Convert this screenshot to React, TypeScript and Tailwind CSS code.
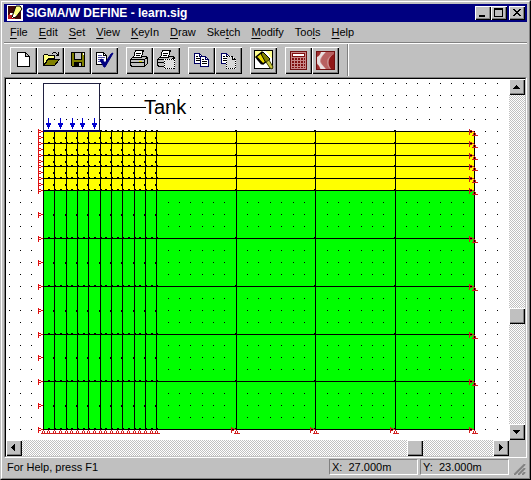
import type { ReactNode } from 'react';

const raised =
  'bg-[#c0c0c0] shadow-[inset_1px_1px_0_#fff,inset_-1px_-1px_0_#000,inset_-2px_-2px_0_#808080]';
const track =
  'bg-[conic-gradient(#fff_25%,#c0c0c0_0_50%,#fff_0_75%,#c0c0c0_0)] bg-[length:2px_2px]';

/* ---------- toolbar icons ---------- */

const NewIcon = () => (
  <path d="M7.5 5.5h8l4 4v10h-12zM15.5 5.5v4h4" fill="#fff" stroke="#000" />
);

const OpenIcon = () => (
  <>
    <path d="M6.5 18.5v-10l1-1h3l1 1h6v3h-6z" fill="#ffff80" stroke="#000" />
    <path d="M6.5 18.5l5-6h11l-5 6z" fill="#808000" stroke="#000" />
    <path d="M15 6.5h1M16 5.5h3M19 6.5h1M20 7.5h2M19 8.5h3M21.5 5v4" stroke="#000" fill="none" />
  </>
);

const SaveIcon = () => (
  <>
    <path d="M7.5 5.5h13v14h-12l-1-1z" fill="#808000" stroke="#000" />
    <path d="M10.5 5.5h7v7h-7z" fill="#c0c0c0" stroke="#000" />
    <path d="M10 15h8v5h-8z" fill="#000" />
    <path d="M15 16h2v3h-2z" fill="#c0c0c0" />
    <path d="M19 6h1v2h-1z" fill="#fff" />
  </>
);

const VerifyIcon = () => (
  <>
    <path d="M5.5 5.5h7l3 3v9h-10z" fill="#fff" stroke="#000" />
    <path d="M12.5 5.5v3h3" stroke="#000" fill="none" />
    <path d="M7 8.5h4M7 10.5h7M7 12.5h6M7 14.5h5" stroke="#5050a0" />
    <path
      d="M9 13l2-1 3 4 6-9 2-1-1 2-7 12h-1z"
      fill="#000080"
      stroke="#000080"
      shapeRendering="auto"
    />
  </>
);

const PrinterBody = () => (
  <>
    <path d="M4.5 12.5l3-3h13l1 2v5l-3 3h-13l-1-2z" fill="#c0c0c0" stroke="#000" />
    <path d="M4.5 12.5h14l3-2M18.5 12.5v7M5 15.5h13" stroke="#000" fill="none" />
    <path d="M7.5 10.5l2-7h8l-1 2-1 5z" fill="#fff" stroke="#000" />
    <path d="M10 6.5h5M10 8.5h4" stroke="#000" />
    <path d="M13 14h3v1h-3z" fill="#d8d800" />
  </>
);

const PrintAreaIcon = () => (
  <>
    <PrinterBody />
    <path d="M11.5 12.5h10v9h-10z" fill="#e0e0e0" stroke="#fff" />
    <path d="M11.5 12.5h10v9h-10z" fill="none" stroke="#000" strokeDasharray="1 1" />
  </>
);

const Sheet = ({ x, y }: { x: number; y: number }) => (
  <g transform={`translate(${x} ${y})`}>
    <path d="M.5.5h5l3 3v7h-8z" fill="#fff" stroke="#000060" />
    <path d="M5.5.5v3h3" fill="none" stroke="#000060" />
    <path d="M2 3.5h2M2 5.5h5M2 7.5h5" stroke="#000" />
  </g>
);

const CopyIcon = () => (
  <>
    <Sheet x={6} y={6} />
    <Sheet x={12} y={9} />
  </>
);

const CopyAreaIcon = () => (
  <>
    <Sheet x={6} y={6} />
    <path d="M11.5 9.5h6l3 3v9h-9z" fill="#d8d8d8" stroke="#fff" />
    <path d="M11.5 9.5h6l3 3v9h-9z" fill="none" stroke="#000" strokeDasharray="1 1" />
    <path d="M17.5 9.5v3h3" fill="none" stroke="#000" />
  </>
);

const BrushIcon = () => (
  <>
    <path d="M4.5 3.5h18v18h-18z" fill="#fff" stroke="#000" />
    <path d="M5 4h7l-7 8zM16 4h6v8z" fill="#ffff90" />
    <g shapeRendering="auto">
      <path d="M6 10l6-5 6 8-5 4z" fill="#e8d800" stroke="#000" strokeWidth="1.5" />
      <path d="M11 7l2-2 7 7-4 4z" fill="#808000" stroke="#000" />
      <path d="M16 15l3-2 4 7-1 2-2-1z" fill="#c8c840" stroke="#404000" />
      <path d="M7 11l5 6" stroke="#000" strokeWidth="2" />
    </g>
  </>
);

const CalculatorIcon = () => (
  <>
    <path d="M5.5 4.5h16v18h-16z" fill="#c88a8a" stroke="#701010" />
    <path d="M7.5 6.5h12v3h-12z" fill="#fff" stroke="#801010" />
    <path
      d="M7 12h13M7 15h13M7 18h13"
      stroke="#801010"
      strokeWidth="2"
      strokeDasharray="2 1"
    />
    <path d="M7 20.5h13" stroke="#801010" strokeDasharray="2 1" />
  </>
);

const ContourIcon = () => (
  <>
    <path d="M4.5 4.5h18v18h-18z" fill="#c98d8d" />
    <g shapeRendering="auto">
      <path d="M5 5h9c-4 4-6 6-6 9s4 5 6 8H9c-3-2-4-5-4-8z" fill="#e8dede" />
      <path d="M5 5h4c-1 3-2 4-4 5zM5 17c2 1 3 3 3 5H5z" fill="#a03030" />
      <path d="M14 5h8v2c-5 2-7 5-7 8s1 5 3 7h-4c-2-3-5-5-5-8s2-6 5-9z" fill="#b86060" />
      <path d="M22 7c-6 3-7 10-3 15h3z" fill="#901818" />
    </g>
    <path d="M4.5 4.5h18v18h-18z" fill="none" stroke="#701010" />
  </>
);

const toolGroups: { name: string; icon: ReactNode }[][] = [
  [
    { name: 'New', icon: <NewIcon /> },
    { name: 'Open', icon: <OpenIcon /> },
    { name: 'Save', icon: <SaveIcon /> },
    { name: 'Verify', icon: <VerifyIcon /> },
  ],
  [
    { name: 'Print', icon: <PrinterBody /> },
    { name: 'Print selection', icon: <PrintAreaIcon /> },
  ],
  [
    { name: 'Copy', icon: <CopyIcon /> },
    { name: 'Copy selection', icon: <CopyAreaIcon /> },
  ],
  [{ name: 'Redraw', icon: <BrushIcon /> }],
  [
    { name: 'Solve', icon: <CalculatorIcon /> },
    { name: 'Contour', icon: <ContourIcon /> },
  ],
];

/* Each menu is split around its accelerator letter. */
const menus: [string, string, string][] = [
  ['', 'F', 'ile'],
  ['', 'E', 'dit'],
  ['', 'S', 'et'],
  ['', 'V', 'iew'],
  ['', 'K', 'eyIn'],
  ['', 'D', 'raw'],
  ['Ske', 't', 'ch'],
  ['', 'M', 'odify'],
  ['Too', 'l', 's'],
  ['', 'H', 'elp'],
];

/* ---------- finite element mesh ---------- */

const gx = (n: number) => Math.floor(37.3 + n * 11.35);
const gy = (n: number) => Math.floor(52.2 + n * 11.93);
const range = (from: number, to: number, step = 1) =>
  Array.from({ length: Math.floor((to - from) / step) + 1 }, (_, i) => from + i * step);

const LEFT = gx(0);
const RIGHT = gx(38);
const TOP = gy(0);
const LAYER = gy(5);
const BASE = gy(25);
const fineCols = range(1, 10);
const coarseCols = [17, 24, 31];
const fineRows = range(0, 5);
const coarseRows = [9, 13, 17, 21, 25];
const allRows = [...fineRows, ...coarseRows];

const RollerRight = ({ x, y }: { x: number; y: number }) => (
  <path
    d={`M${x + 0.5} ${y - 2}v6M${x + 1} ${y - 0.5}h2M${x + 3} ${y + 0.5}h2M${x + 1} ${y + 1.5}h2`}
  />
);
const RollerUp = ({ x, y }: { x: number; y: number }) => (
  <path
    d={`M${x} ${y}h1M${x - 1} ${y + 1}h1M${x + 1} ${y + 1}h1M${x - 1} ${y + 2}h1M${x + 1} ${y + 2}h1M${x - 2} ${y + 3}h6`}
  />
);

function Mesh() {
  return (
    <svg
      width="502"
      height="361"
      viewBox="0 0 502 361"
      className="block max-w-none"
      shapeRendering="crispEdges"
      role="img"
      aria-label="Finite element mesh"
    >
      <rect x={LEFT} y={TOP} width={RIGHT - LEFT} height={LAYER - TOP} fill="#ff0" />
      <rect x={LEFT} y={LAYER} width={RIGHT - LEFT} height={BASE - LAYER} fill="#0f0" />

      {range(-4, 25).map((r) =>
        range(-3, 41).map((c) => (
          <rect key={`${r}:${c}`} x={gx(c)} y={gy(r)} width="1" height="1" fill="#000" />
        )),
      )}

      <g fill="#000">
        {allRows.map((r) => (
          <rect key={r} x={LEFT} y={gy(r)} width={RIGHT - LEFT + 1} height="1" />
        ))}
        {[0, ...fineCols, ...coarseCols, 38].map((c) => (
          <rect key={c} x={gx(c)} y={TOP} width="1" height={BASE - TOP + 1} />
        ))}
        {allRows.map((r) =>
          range(0.5, 10, 0.5).map((c) => (
            <rect key={`${r}:${c}`} x={gx(c)} y={gy(r) - 1} width="2" height="1" />
          )),
        )}
        {[...range(0.5, 4.5), 7, 11, 15, 19, 23].map((r) =>
          fineCols.map((c) => (
            <rect key={`${r}:${c}`} x={gx(c) - 1} y={gy(r)} width="1" height="2" />
          )),
        )}
        {allRows.map((r) =>
          coarseCols.map((c) => (
            <rect key={`${r}:${c}`} x={gx(c) - 1} y={gy(r) - 1} width="2" height="2" />
          )),
        )}
      </g>

      <g stroke="#e01010" fill="none">
        {range(0, 5, 0.5).map((r) => (
          <RollerRight key={r} x={32} y={gy(r)} />
        ))}
        <path d="M32.5 50v64" />
        {range(7, 25, 2).map((r) => (
          <RollerRight key={r} x={32} y={gy(r)} />
        ))}
      </g>
      <g stroke="#d02020" fill="none">
        {allRows.map((r) => (
          <g key={r}>
            <RollerRight x={RIGHT - 5} y={gy(r)} />
            <RollerUp x={RIGHT} y={gy(r) + 1.5} />
          </g>
        ))}
        {coarseCols.map((c) => (
          <g key={c}>
            <RollerRight x={gx(c) - 5} y={BASE} />
            <RollerUp x={gx(c)} y={BASE + 1.5} />
          </g>
        ))}
        {range(0, 10, 0.5).map((c) => (
          <RollerUp key={c} x={gx(c)} y={BASE + 1.5} />
        ))}
        <path d={`M${LEFT - 2} ${BASE + 4.5}H${gx(10) + 4}`} />
      </g>

      <path d="M37.5 52V4.5h56V52" fill="none" stroke="#202040" />
      <path d="M37 52h57" stroke="#000060" strokeWidth="2" />
      <path d="M94 28.5h45" stroke="#000" />
      {[42, 54, 66, 76, 88].map((x) => (
        <path key={x} d={`M${x} 39h1v5h2v2h-1v2h-1v2h-1v-2h-1v-2h-1v-2h2z`} fill="#0000d0" />
      ))}
      <text x="138" y="35" fontSize="20" fill="#000" className="font-['Liberation_Sans',Arial,sans-serif]">
        Tank
      </text>
    </svg>
  );
}

/* ---------- window parts ---------- */

const arrows = {
  up: 'M7 6h1v1h1v1h1v1h1v1H4V9h1V8h1V7h1z',
  down: 'M4 6h7v1h-1v1H9v1H8v1H7V9H6V8H5V7H4z',
  left: 'M9 4v7H8v-1H7V9H6V8H5V7h1V6h1V5h1V4z',
  right: 'M6 4h1v1h1v1h1v1h1v1H9v1H8v1H7v1H6z',
};

function ScrollButton({ dir }: { dir: keyof typeof arrows }) {
  return (
    <button type="button" aria-label={`Scroll ${dir}`} className={`size-4 shrink-0 ${raised}`}>
      <svg width="16" height="16" className="block" shapeRendering="crispEdges">
        <path d={arrows[dir]} />
      </svg>
    </button>
  );
}

function CaptionButton({ name, d }: { name: string; d: string }) {
  return (
    <button type="button" aria-label={name} className={`h-3.5 w-4 ${raised}`}>
      <svg width="16" height="14" className="block" shapeRendering="crispEdges">
        <path d={d} />
      </svg>
    </button>
  );
}

function TitleBar() {
  return (
    <header className="flex h-[18px] items-center bg-[#000080] pr-0.5 pl-[3px] text-white">
      <svg width="16" height="16" className="shrink-0" shapeRendering="crispEdges">
        <path d="M0 0h16v16H0z" fill="#fff" />
        <path d="M1 1h13v13H1z" fill="#400808" />
        <path d="M1 10c4-3 5 0 7 4H1z" fill="#c02020" />
        <path d="M3 8h5v2H3z" fill="#fff" />
        <path d="M9 1h4l2 3-6 8-4 1 1-4z" fill="#ffff80" stroke="#000" shapeRendering="auto" />
        <path d="M5 13l4-2-2-2z" fill="#fff" />
      </svg>
      <h1 className="ml-[3px] flex-1 text-[12px] leading-4 font-bold whitespace-nowrap">
        SIGMA/W DEFINE - learn.sig
      </h1>
      <CaptionButton name="Minimize" d="M4 9h6v2H4z" />
      <CaptionButton name="Maximize" d="M3 2h9v9H3zM4 4v6h7V4z" />
      <span className="w-0.5" />
      <CaptionButton
        name="Close"
        d="M4 3h2v1h1v1h2V4h1V3h2v1h-1v1h-1v1H9v1h1v1h1v1h1v1h-2V9H9V8H7v1H6v1H4V9h1V8h1V7h1V6H6V5H5V4H4z"
      />
    </header>
  );
}

function MenuBar() {
  return (
    <nav className="flex h-[22px] gap-[11px] border-b border-white pl-1.5 shadow-[inset_0_-1px_0_#808080]">
      {menus.map(([before, key, after]) => (
        <button key={before + key + after} type="button" className="h-5 text-[11px] leading-5">
          {before}
          <u className="underline-offset-2">{key}</u>
          {after}
        </button>
      ))}
    </nav>
  );
}

function ToolBar() {
  return (
    <div role="toolbar" aria-label="Standard" className="flex h-[33px] gap-2 pt-[3px] pl-1.5">
      {toolGroups.map((group) => (
        <div key={group[0].name} className="flex">
          {group.map((tool) => (
            <button
              key={tool.name}
              type="button"
              aria-label={tool.name}
              className={`size-[27px] ${raised}`}
            >
              <svg width="27" height="27" className="block" shapeRendering="crispEdges">
                {tool.icon}
              </svg>
            </button>
          ))}
        </div>
      ))}
      <span className="-mt-[3px] h-8 w-0.5 border-l border-[#808080] bg-white" />
    </div>
  );
}

function DrawingView() {
  return (
    <main className="border border-t-[#808080] border-r-white border-b-white border-l-[#808080]">
      <div className="border border-t-black border-r-[#c0c0c0] border-b-[#c0c0c0] border-l-black">
        <div className="flex">
          <div className="min-w-0 flex-1 overflow-hidden bg-white">
            <Mesh />
          </div>
          <div className={`flex w-4 flex-col ${track}`}>
            <ScrollButton dir="up" />
            <span className="flex-[213]" />
            <button type="button" aria-label="Vertical position" className={`size-4 ${raised}`} />
            <span className="flex-[100]" />
            <ScrollButton dir="down" />
          </div>
        </div>
        <div className="flex h-4">
          <div className={`flex flex-1 ${track}`}>
            <ScrollButton dir="left" />
            <span className="flex-[385]" />
            <button type="button" aria-label="Horizontal position" className={`size-4 ${raised}`} />
            <span className="flex-[70]" />
            <ScrollButton dir="right" />
          </div>
          <div className="w-4 bg-[#c0c0c0]" />
        </div>
      </div>
    </main>
  );
}

const pane =
  'h-4 w-[89px] border border-t-[#808080] border-r-white border-b-white border-l-[#808080] pl-0.5 leading-[15px] whitespace-pre';

function StatusBar() {
  return (
    <footer className="flex h-[18px] items-center text-[11px]">
      <p className="flex-1 pl-[3px] leading-4">For Help, press F1</p>
      <p className={pane}>{'X:  27.000m'}</p>
      <p className={`ml-0.5 ${pane}`}>{'Y:  23.000m'}</p>
      <svg width="18" height="16" className="shrink-0">
        <path d="M4 16L16 4M8 16l8-8M12 16l4-4" stroke="#fff" />
        <path d="M5 16L16 5M9 16l7-7M13 16l3-3" stroke="#808080" strokeWidth="2" />
      </svg>
    </footer>
  );
}

export default function App() {
  return (
    <div className="w-full border border-t-[#c0c0c0] border-r-black border-b-black border-l-[#c0c0c0] bg-[#c0c0c0] font-['Liberation_Sans',Arial,sans-serif] text-black">
      <div className="border border-t-white border-r-[#808080] border-b-[#808080] border-l-white px-0.5 py-0.5">
        <TitleBar />
        <MenuBar />
        <ToolBar />
        <DrawingView />
        <StatusBar />
      </div>
    </div>
  );
}
